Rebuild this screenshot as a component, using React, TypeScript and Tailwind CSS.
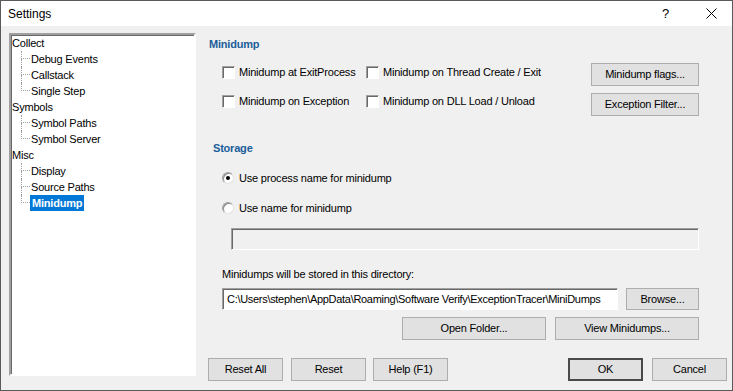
import React from 'react';

const FONT = { fontFamily: '"Liberation Sans", Arial, sans-serif' };

function Button({ label, className = '', isDefault = false }: { label: string; className?: string; isDefault?: boolean }) {
  return (
    <div
      className={`flex items-center justify-center bg-[#e1e1e1] text-[11px] text-black ${
        isDefault ? 'border-2 border-[#4a4a4a]' : 'border border-[#adadad]'
      } ${className}`}
    >
      {label}
    </div>
  );
}

function Checkbox({ label, className = '' }: { label: string; className?: string }) {
  return (
    <div className={`flex items-center h-[20px] ${className}`}>
      <div className="w-[13px] h-[13px] bg-white border-t border-l border-t-[#a0a0a0] border-l-[#a0a0a0] border-b border-r border-b-white border-r-white shadow-[inset_1px_1px_0_#696969]" />
      <span className="ml-[4px] text-[11px] text-black whitespace-nowrap">{label}</span>
    </div>
  );
}

function Radio({ label, checked = false }: { label: string; checked?: boolean }) {
  return (
    <div className="flex items-center h-[20px]">
      <div className="w-[12px] h-[12px] rounded-full bg-white border border-t-[#a0a0a0] border-l-[#a0a0a0] border-b-[#e3e3e3] border-r-[#e3e3e3] flex items-center justify-center shadow-[inset_1px_1px_0_#8a8a8a]">
        {checked && <div className="w-[4px] h-[4px] rounded-full bg-black" />}
      </div>
      <span className="ml-[5px] text-[11px] text-black whitespace-nowrap">{label}</span>
    </div>
  );
}

type TreeGroup = { name: string; children: string[] };

const tree: TreeGroup[] = [
  { name: 'Collect', children: ['Debug Events', 'Callstack', 'Single Step'] },
  { name: 'Symbols', children: ['Symbol Paths', 'Symbol Server'] },
  { name: 'Misc', children: ['Display', 'Source Paths', 'Minidump'] },
];

function TreeView() {
  return (
    <div className="w-[187px] h-[343px] bg-white border-2 border-t-[#a0a0a0] border-l-[#a0a0a0] border-b-white border-r-white shadow-[inset_1px_1px_0_#696969]">
      {tree.map((g) => (
        <div key={g.name}>
          <div className="h-[16px] flex items-center pl-[1px] text-[11px] text-black">{g.name}</div>
          {g.children.map((c, i) => {
            const last = i === g.children.length - 1;
            const selected = c === 'Minidump';
            return (
              <div key={c} className="h-[16px] flex items-stretch pl-[10px]">
                <div className="w-[9px] flex flex-col">
                  <div className="h-[8px] border-l border-b border-dotted border-[#a0a0a0]" />
                  <div className={`h-[8px] ${last ? '' : 'border-l border-dotted border-[#a0a0a0]'}`} />
                </div>
                <div className="flex items-center">
                  <span
                    className={`text-[11px] leading-[16px] px-[1px] ${
                      selected ? 'bg-[#0078d7] text-white font-bold px-[2px]' : 'text-black'
                    }`}
                  >
                    {c}
                  </span>
                </div>
              </div>
            );
          })}
        </div>
      ))}
    </div>
  );
}

export default function App() {
  return (
    <div style={FONT} className="w-[733px] h-[391px] border border-[#5a5a5a] flex flex-col bg-[#f0f0f0] overflow-hidden tracking-[-0.2px]">
      {/* title bar */}
      <div className="h-[25px] bg-white flex items-center pl-[7px] pr-[15px] shrink-0">
        <span className="text-[12px] text-black tracking-normal">Settings</span>
        <span className="ml-auto text-[13px] text-black">?</span>
        <svg className="ml-[37px]" width="11" height="11" viewBox="0 0 11 11">
          <path d="M0.5 0.5 L10.5 10.5 M10.5 0.5 L0.5 10.5" stroke="#000" strokeWidth="1" />
        </svg>
      </div>

      {/* body */}
      <div className="flex-1 flex pl-[8px] pt-[7px]">
        <TreeView />

        <div className="ml-[12px] w-[519px] flex flex-col">
          {/* Minidump section */}
          <div className="h-[22px] flex items-center pl-[1px] text-[11px] font-bold text-[#1b5e9a]">Minidump</div>
          <div className="flex h-[61px] pr-[28px]">
            <div className="pl-[14px] pt-[7px] flex flex-col gap-[9px]">
              <div className="flex">
                <Checkbox label="Minidump at ExitProcess" className="w-[144px]" />
                <Checkbox label="Minidump on Thread Create / Exit" />
              </div>
              <div className="flex">
                <Checkbox label="Minidump on Exception" className="w-[144px]" />
                <Checkbox label="Minidump on DLL Load / Unload" />
              </div>
            </div>
            <div className="ml-auto pt-[8px] flex flex-col gap-[7px]">
              <Button label="Minidump flags..." className="w-[108px] h-[23px]" />
              <Button label="Exception Filter..." className="w-[108px] h-[23px]" />
            </div>
          </div>

          {/* Storage section */}
          <div className="mt-[21px] h-[22px] flex items-center pl-[5px] text-[11px] font-bold text-[#1b5e9a]">Storage</div>
          <div className="pl-[14px] pr-[28px] flex flex-col">
            <div className="mt-[9px]">
              <Radio label="Use process name for minidump" checked />
            </div>
            <div className="mt-[10px]">
              <Radio label="Use name for minidump" />
            </div>
            <div className="mt-[10px] ml-[9px] h-[22px] bg-[#f0f0f0] border border-t-[#a0a0a0] border-l-[#a0a0a0] border-b-white border-r-white shadow-[inset_1px_1px_0_#696969]" />

            <div className="mt-[17px] h-[14px] flex items-center text-[11px] text-black">
              Minidumps will be stored in this directory:
            </div>
            <div className="mt-[7px] flex h-[22px]">
              <div className="w-[396px] h-[22px] bg-white border border-t-[#a0a0a0] border-l-[#a0a0a0] border-b-white border-r-white shadow-[inset_1px_1px_0_#696969] overflow-hidden flex items-center pl-[4px]">
                <span className="text-[11px] text-black whitespace-nowrap tracking-[-0.3px]">
                  C:\Users\stephen\AppData\Roaming\Software Verify\ExceptionTracer\MiniDumps
                </span>
              </div>
              <Button label="Browse..." className="ml-[8px] w-[73px] h-[22px]" />
            </div>
            <div className="mt-[7px] flex justify-end gap-[9px]">
              <Button label="Open Folder..." className="w-[144px] h-[23px]" />
              <Button label="View Minidumps..." className="w-[144px] h-[23px]" />
            </div>
          </div>

          {/* bottom buttons */}
          <div className="mt-[18px] flex">
            <Button label="Reset All" className="w-[75px] h-[23px]" />
            <Button label="Reset" className="ml-[8px] w-[75px] h-[23px]" />
            <Button label="Help (F1)" className="ml-[7px] w-[75px] h-[23px]" />
            <Button label="OK" isDefault className="ml-[120px] w-[75px] h-[23px]" />
            <Button label="Cancel" className="ml-[9px] w-[75px] h-[23px]" />
          </div>
        </div>
      </div>
    </div>
  );
}
